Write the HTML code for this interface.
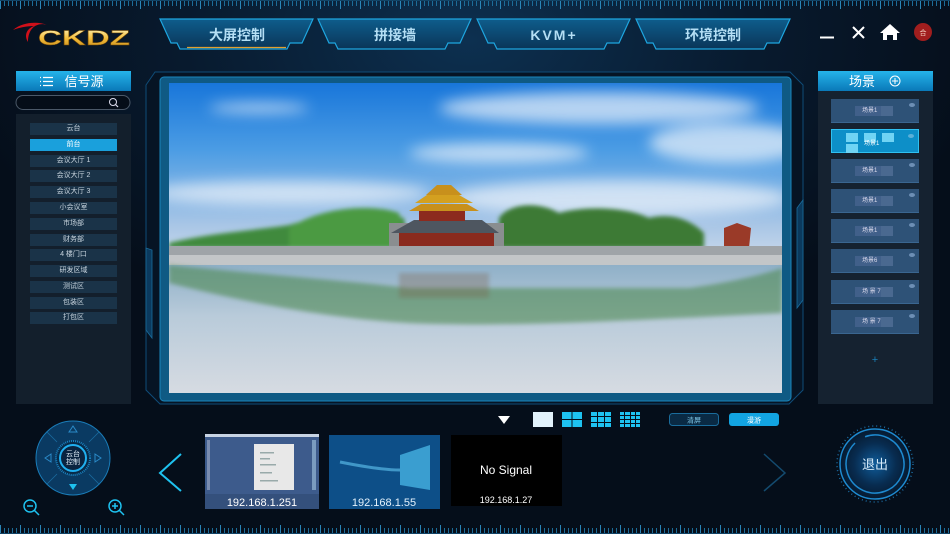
<!DOCTYPE html>
<html><head><meta charset="utf-8">
<style>
*{margin:0;padding:0;box-sizing:border-box}
body{width:950px;height:534px;overflow:hidden;background:radial-gradient(ellipse 520px 300px at 470px 40px,#0d3050 0%,#081a2e 55%,#050e1a 100%);font-family:"Liberation Sans","Noto Sans CJK SC",sans-serif;position:relative;color:#d8e6f0}
.abs{position:absolute}
.li{position:absolute;left:30px;width:87px;height:12px;background:#1a3348;font-size:7px;line-height:12px;text-align:center;color:#c8d4de}
.card{position:absolute;left:831px;width:88px;height:24px;background:#2e5277;border-bottom:1px solid #3a6690}
.card .lb{position:absolute;left:24px;top:7px;width:38px;height:10px;background:#41608a;font-size:6px;line-height:10px;color:#dde;padding-left:7px}
.card .lb i{position:absolute;right:0;top:0;width:12px;height:10px;background:#4a6990}
.card .dot{position:absolute;right:4px;top:4px;width:6px;height:4px;border-radius:50%;background:#6d8fb5}
</style></head><body>
<svg class="abs" style="left:0;top:0" width="950" height="534">
<defs>
<linearGradient id="tab" x1="0" y1="0" x2="0" y2="1"><stop offset="0" stop-color="#0e5d8c"/><stop offset="1" stop-color="#0a3558"/></linearGradient>
<linearGradient id="hd" x1="0" y1="0" x2="0" y2="1"><stop offset="0" stop-color="#25b3ea"/><stop offset="1" stop-color="#0a79b8"/></linearGradient>
<linearGradient id="gold" x1="0" y1="0" x2="0" y2="1"><stop offset="0" stop-color="#fff6c0"/><stop offset=".5" stop-color="#f3bd3a"/><stop offset="1" stop-color="#c08418"/></linearGradient>
<radialGradient id="exit" cx=".5" cy=".5" r=".5"><stop offset="0" stop-color="#0f5c9a"/><stop offset=".6" stop-color="#082c50"/><stop offset="1" stop-color="#061a30"/></radialGradient>
</defs>
<path d="M0 0.5H950" stroke="#124466"/>
<path d="M0 533.5H950" stroke="#124466"/>
<!-- tabs -->
<g stroke="#1ea6e0" stroke-width="1.2">
<path d="M160 19H313L302 43H290L287 49H180L177 43H171Z" fill="url(#tab)"/>
<path d="M318 19H471L460 43H448L445 49H338L335 43H329Z" fill="url(#tab)"/>
<path d="M477 19H630L619 43H607L604 49H497L494 43H488Z" fill="url(#tab)"/>
<path d="M636 19H790L779 43H767L764 49H656L653 43H647Z" fill="url(#tab)"/>
</g>
<path d="M187 47.5H286" stroke="#e0a030" stroke-width="1.2"/>
<g fill="#b4def4" font-size="14" font-weight="bold" text-anchor="middle" font-family="Liberation Sans,Noto Sans CJK SC,sans-serif">
<text x="237" y="40">大屏控制</text><text x="395" y="40">拼接墙</text><text x="554" y="40" letter-spacing="2">KVM+</text><text x="713" y="40">环境控制</text>
</g>
<!-- logo -->
<path d="M13 30C22 22 38 21 47 25C38 22 28 27 28 42C24 36 26 29 34 26C26 26 18 28 13 30Z" fill="#d0101a"/>
<text x="38" y="45" font-size="21" font-weight="bold" fill="url(#gold)" stroke="#7a4a00" stroke-width=".4" textLength="92" lengthAdjust="spacingAndGlyphs" font-family="Liberation Sans,sans-serif">CKDZ</text>
<!-- top right icons -->
<path d="M820 37.5H834" stroke="#fff" stroke-width="2"/>
<path d="M853 27L864 38M864 27L853 38" stroke="#fff" stroke-width="2"/>
<path d="M890 24L900 33H897V40H893V35H887V40H883V33H880Z" fill="#fff"/>
<circle cx="923" cy="32" r="9" fill="#a11e1e"/><text x="923" y="35" font-size="7" fill="#f4d0c0" text-anchor="middle">合</text>
<!-- main frame -->
<path d="M155 72H790L803 85V390L789 404H160L146 390V85Z" fill="#061424" stroke="#0f4c78" stroke-width="1"/>
<rect x="160" y="77" width="631" height="324" rx="4" fill="#0f5a84" stroke="#1b86bb"/>
<path d="M146 248V330L152 338V250Z M803 200V300L797 308V208Z" fill="#0b3a5e" stroke="#1a6c9c" stroke-width=".8"/>
<!-- left panel -->
<rect x="16" y="71" width="115" height="20" fill="url(#hd)"/>
<g stroke="#fff" stroke-width="1.2"><path d="M43 77.5H53M43 81.5H53M43 85.5H53"/><path d="M40 77.5h1M40 81.5h1M40 85.5h1"/></g>
<text x="84" y="86" font-size="13" fill="#fff" text-anchor="middle">信号源</text>
<rect x="16" y="95.5" width="114" height="14" rx="7" fill="#050d18" stroke="#4b5868"/>
<circle cx="113" cy="102" r="3.5" fill="none" stroke="#dde" stroke-width="1"/><path d="M115.5 104.5L118 107" stroke="#dde" stroke-width="1.2"/>
<rect x="16" y="114" width="115" height="290" fill="#131f2c"/>
<!-- right panel -->
<rect x="818" y="71" width="115" height="20" fill="url(#hd)"/>
<text x="862" y="86" font-size="13" fill="#fff" text-anchor="middle">场景</text>
<circle cx="895" cy="81" r="5" fill="none" stroke="#fff"/><path d="M892 81H898M895 78V84" stroke="#fff"/>
<rect x="818" y="91" width="115" height="313" fill="#152230"/>
<text x="875" y="363" font-size="11" fill="#1a7fb8" text-anchor="middle">+</text>
<!-- bottom controls -->
<path d="M498 416H510L504 424Z" fill="#fff"/>
<rect x="533" y="412" width="20" height="15" fill="#e2f2fb"/>
<g fill="#1ec2f0">
<rect x="562" y="412" width="9.5" height="7"/><rect x="572.5" y="412" width="9.5" height="7"/><rect x="562" y="420" width="9.5" height="7"/><rect x="572.5" y="420" width="9.5" height="7"/>
</g>
<rect x="669.5" y="413.5" width="49" height="12" rx="3" fill="#0a2a44" stroke="#1a6c9c"/>
<text x="694" y="422.5" font-size="7" fill="#7fc8ea" text-anchor="middle">清屏</text>
<rect x="729" y="413" width="50" height="13" rx="3" fill="#12a4e2"/>
<text x="754" y="422.5" font-size="7" fill="#fff" text-anchor="middle">漫游</text>
<!-- PTZ -->
<circle cx="73" cy="458" r="37" fill="#0a3a62" stroke="#1a7cb8" stroke-width="1"/>
<g stroke="#1a6aa0" stroke-width=".8"><path d="M47 432L57 442M99 432L89 442M47 484L57 474M99 484L89 474"/></g>
<circle cx="73" cy="458" r="17" fill="#082a48" stroke="#1a82c0" stroke-dasharray="1 1" stroke-width="2"/>
<circle cx="73" cy="458" r="13" fill="#0a2440" stroke="#20b0f0" stroke-width="2"/>
<text x="73" y="456" font-size="7" fill="#e0eef8" text-anchor="middle">云台</text><text x="73" y="464" font-size="7" fill="#e0eef8" text-anchor="middle">控制</text>
<path d="M73 426L69 432H77Z M45 458L51 454V462Z M101 458L95 454V462Z" fill="none" stroke="#2a8ac8"/>
<path d="M73 490L69 484H77Z" fill="#1ec2f0"/>
<g fill="none" stroke="#1ec2f0" stroke-width="1.5">
<circle cx="30" cy="506" r="6"/><path d="M34.5 510.5L39 515M27 506H33"/>
<circle cx="115" cy="506" r="6"/><path d="M119.5 510.5L124 515M112 506H118M115 503V509"/>
</g>
<path d="M181 454L160 473L181 491" fill="none" stroke="#1ec2f0" stroke-width="2"/>
<path d="M764 454L785 473L764 491" fill="none" stroke="#134a6e" stroke-width="1.5"/>
<!-- thumbnails -->
<rect x="205" y="434" width="114" height="75" fill="#3d5b8c"/>
<rect x="254" y="444" width="40" height="46" fill="#e8e8e8"/>
<g fill="#9aa"><rect x="260" y="452" width="14" height="1.5"/><rect x="260" y="458" width="10" height="1.5"/><rect x="260" y="464" width="16" height="1.5"/><rect x="260" y="472" width="12" height="1.5"/><rect x="260" y="480" width="18" height="1.5"/></g>
<rect x="205" y="434" width="114" height="3" fill="#c8d4e4"/>
<rect x="207" y="440" width="3" height="50" fill="#7a8cb0"/><rect x="312" y="440" width="4" height="50" fill="#7a9cc0"/>
<rect x="205" y="494" width="114" height="15" fill="#34507c"/>
<text x="262" y="506" font-size="11" fill="#fff" text-anchor="middle">192.168.1.251</text>
<rect x="329" y="435" width="111" height="74" fill="#0d4f88"/>
<path d="M400 455L430 445V490L400 485Z" fill="#4fc0f0" opacity=".7"/>
<path d="M340 462Q380 470 400 470" stroke="#63c8f4" stroke-width="3" fill="none" opacity=".6"/>
<text x="384" y="506" font-size="11" fill="#e4f2fc" text-anchor="middle">192.168.1.55</text>
<rect x="451" y="435" width="111" height="71" fill="#000"/>
<text x="506" y="474" font-size="12" fill="#fff" text-anchor="middle">No Signal</text>
<text x="506" y="503" font-size="9" fill="#fff" text-anchor="middle">192.168.1.27</text>
<!-- exit -->
<circle cx="875" cy="464" r="38" fill="none" stroke="#1a6aa0" stroke-dasharray="1 3" stroke-width="1.5"/>
<circle cx="875" cy="464" r="35" fill="url(#exit)" stroke="#1e8ad0" stroke-width="1.5"/>
<circle cx="875" cy="464" r="29" fill="none" stroke="#1e8ad0" stroke-width="1.5" stroke-dasharray="170 12" transform="rotate(-110 875 464)"/>
<text x="875" y="469" font-size="13" fill="#d8ecfa" text-anchor="middle">退出</text>
</svg>

<!-- photo -->
<svg class="abs" style="left:169px;top:83px" width="613" height="310" viewBox="0 0 613 310">
<defs>
<linearGradient id="sky" x1="0" y1="0" x2="0" y2="1"><stop offset="0" stop-color="#1876da"/><stop offset=".35" stop-color="#4b9ce4"/><stop offset=".75" stop-color="#a9c6e6"/><stop offset="1" stop-color="#d8e2ee"/></linearGradient>
<linearGradient id="wat" x1="0" y1="0" x2="0" y2="1"><stop offset="0" stop-color="#8fb0c8"/><stop offset=".4" stop-color="#b9cbda"/><stop offset="1" stop-color="#d6dbe2"/></linearGradient>
<filter id="bl" x="-20%" y="-50%" width="140%" height="200%"><feGaussianBlur stdDeviation="7"/></filter>
<filter id="bl2"><feGaussianBlur stdDeviation="2"/></filter>
</defs>
<rect width="613" height="190" fill="url(#sky)"/>
<g fill="#f0f4fa" opacity=".7" filter="url(#bl)">
<ellipse cx="430" cy="25" rx="160" ry="16"/><ellipse cx="560" cy="60" rx="80" ry="20"/><ellipse cx="330" cy="70" rx="90" ry="10"/>
<ellipse cx="120" cy="110" rx="140" ry="12"/><ellipse cx="450" cy="115" rx="170" ry="18"/><ellipse cx="90" cy="25" rx="50" ry="5"/>
</g>
<g filter="url(#bl2)">
<path d="M0 160C40 150 80 148 120 142C160 130 200 128 235 135L240 165H0Z" fill="#3f8a3c"/>
<path d="M120 145C150 125 200 120 230 130L240 165H120Z" fill="#4c9a42"/>
<path d="M330 135C340 120 370 118 390 130C420 122 460 125 480 135C500 130 520 135 535 150V165H330Z" fill="#3c7a34"/>
</g>
<path d="M220 140H335V165H220Z" fill="#8a8e90"/>
<path d="M555 145L568 140L582 145L580 165H555Z" fill="#9a3a28"/>
<path d="M222 150L245 137H313L330 150Z" fill="#4e5660"/>
<rect x="230" y="150" width="95" height="14" fill="#8a2a1e"/>
<rect x="250" y="126" width="46" height="12" fill="#8c2a1e"/>
<path d="M240 128H310L298 121H252Z" fill="#c8901c"/>
<path d="M246 120H304L290 112H258Z" fill="#d4a020"/>
<path d="M257 112H293L282 102H268Z" fill="#c8901c"/>
<path d="M0 163H613V172H0Z" fill="#9fa4a8"/>
<path d="M0 172H613V182H0Z" fill="#c3c6c8"/>
<rect y="182" width="613" height="128" fill="url(#wat)"/>
<path d="M0 182C80 190 200 200 240 205H520C560 200 600 190 613 185V230C500 235 350 245 240 240C150 235 60 215 0 200Z" fill="#4f8a52" opacity=".6" filter="url(#bl2)"/>
<rect x="230" y="190" width="90" height="25" fill="#7a5a40" opacity=".3" filter="url(#bl2)"/>
</svg>

<!-- left list -->
<div class="li" style="top:123px">云台</div>
<div class="li" style="top:139px;background:#1aa0dc;color:#fff">前台</div>
<div class="li" style="top:155px">会议大厅 1</div>
<div class="li" style="top:170px">会议大厅 2</div>
<div class="li" style="top:186px">会议大厅 3</div>
<div class="li" style="top:202px">小会议室</div>
<div class="li" style="top:218px">市场部</div>
<div class="li" style="top:234px">财务部</div>
<div class="li" style="top:249px">4 楼门口</div>
<div class="li" style="top:265px">研发区域</div>
<div class="li" style="top:281px">测试区</div>
<div class="li" style="top:297px">包装区</div>
<div class="li" style="top:312px">打包区</div>

<!-- scene cards -->
<div class="card" style="top:99px"><div class="lb">场景1<i></i></div><div class="dot"></div></div>
<div class="card" style="top:129px;background:#0d8fc8;border:1px solid #30c0f0">
 <div class="abs" style="left:14px;top:3px;width:12px;height:9px;background:#70d4f4"></div>
 <div class="abs" style="left:32px;top:3px;width:12px;height:9px;background:#70d4f4"></div>
 <div class="abs" style="left:50px;top:3px;width:12px;height:9px;background:#70d4f4"></div>
 <div class="abs" style="left:14px;top:14px;width:12px;height:9px;background:#70d4f4"></div>
 <div class="abs" style="left:32px;top:8px;font-size:6px;color:#fff">场景1</div><div class="dot" style="background:#5ab0d8"></div></div>
<div class="card" style="top:159px"><div class="lb">场景1<i></i></div><div class="dot"></div></div>
<div class="card" style="top:189px"><div class="lb">场景1<i></i></div><div class="dot"></div></div>
<div class="card" style="top:219px"><div class="lb">场景1<i></i></div><div class="dot"></div></div>
<div class="card" style="top:249px"><div class="lb">场景6<i></i></div><div class="dot"></div></div>
<div class="card" style="top:280px"><div class="lb">场 景 7<i></i></div><div class="dot"></div></div>
<div class="card" style="top:310px"><div class="lb">场 景 7<i></i></div><div class="dot"></div></div>

<!-- 3x3 / 4x4 grids -->
<div class="abs" style="left:591px;top:412px;width:20px;height:15px;display:grid;grid-template-columns:repeat(3,1fr);gap:1px">
<i style="background:#1ec2f0"></i><i style="background:#1ec2f0"></i><i style="background:#1ec2f0"></i><i style="background:#1ec2f0"></i><i style="background:#1ec2f0"></i><i style="background:#1ec2f0"></i><i style="background:#1ec2f0"></i><i style="background:#1ec2f0"></i><i style="background:#1ec2f0"></i></div>
<div class="abs" style="left:620px;top:412px;width:20px;height:15px;display:grid;grid-template-columns:repeat(4,1fr);gap:1px">
<i style="background:#1ec2f0"></i><i style="background:#1ec2f0"></i><i style="background:#1ec2f0"></i><i style="background:#1ec2f0"></i><i style="background:#1ec2f0"></i><i style="background:#1ec2f0"></i><i style="background:#1ec2f0"></i><i style="background:#1ec2f0"></i><i style="background:#1ec2f0"></i><i style="background:#1ec2f0"></i><i style="background:#1ec2f0"></i><i style="background:#1ec2f0"></i><i style="background:#1ec2f0"></i><i style="background:#1ec2f0"></i><i style="background:#1ec2f0"></i><i style="background:#1ec2f0"></i></div>

<!-- rulers -->
<div class="abs" style="left:0;top:1px;width:950px;height:5px;background:repeating-linear-gradient(90deg,#1c6c98 0 1px,transparent 1px 4px)"></div>
<div class="abs" style="left:0;top:1px;width:950px;height:8px;background:repeating-linear-gradient(90deg,#2a86b8 0 1px,transparent 1px 20px)"></div>
<div class="abs" style="left:0;top:528px;width:950px;height:5px;background:repeating-linear-gradient(90deg,#1c6c98 0 1px,transparent 1px 4px)"></div>
<div class="abs" style="left:0;top:525px;width:950px;height:8px;background:repeating-linear-gradient(90deg,#2a86b8 0 1px,transparent 1px 20px)"></div>
</body></html>
